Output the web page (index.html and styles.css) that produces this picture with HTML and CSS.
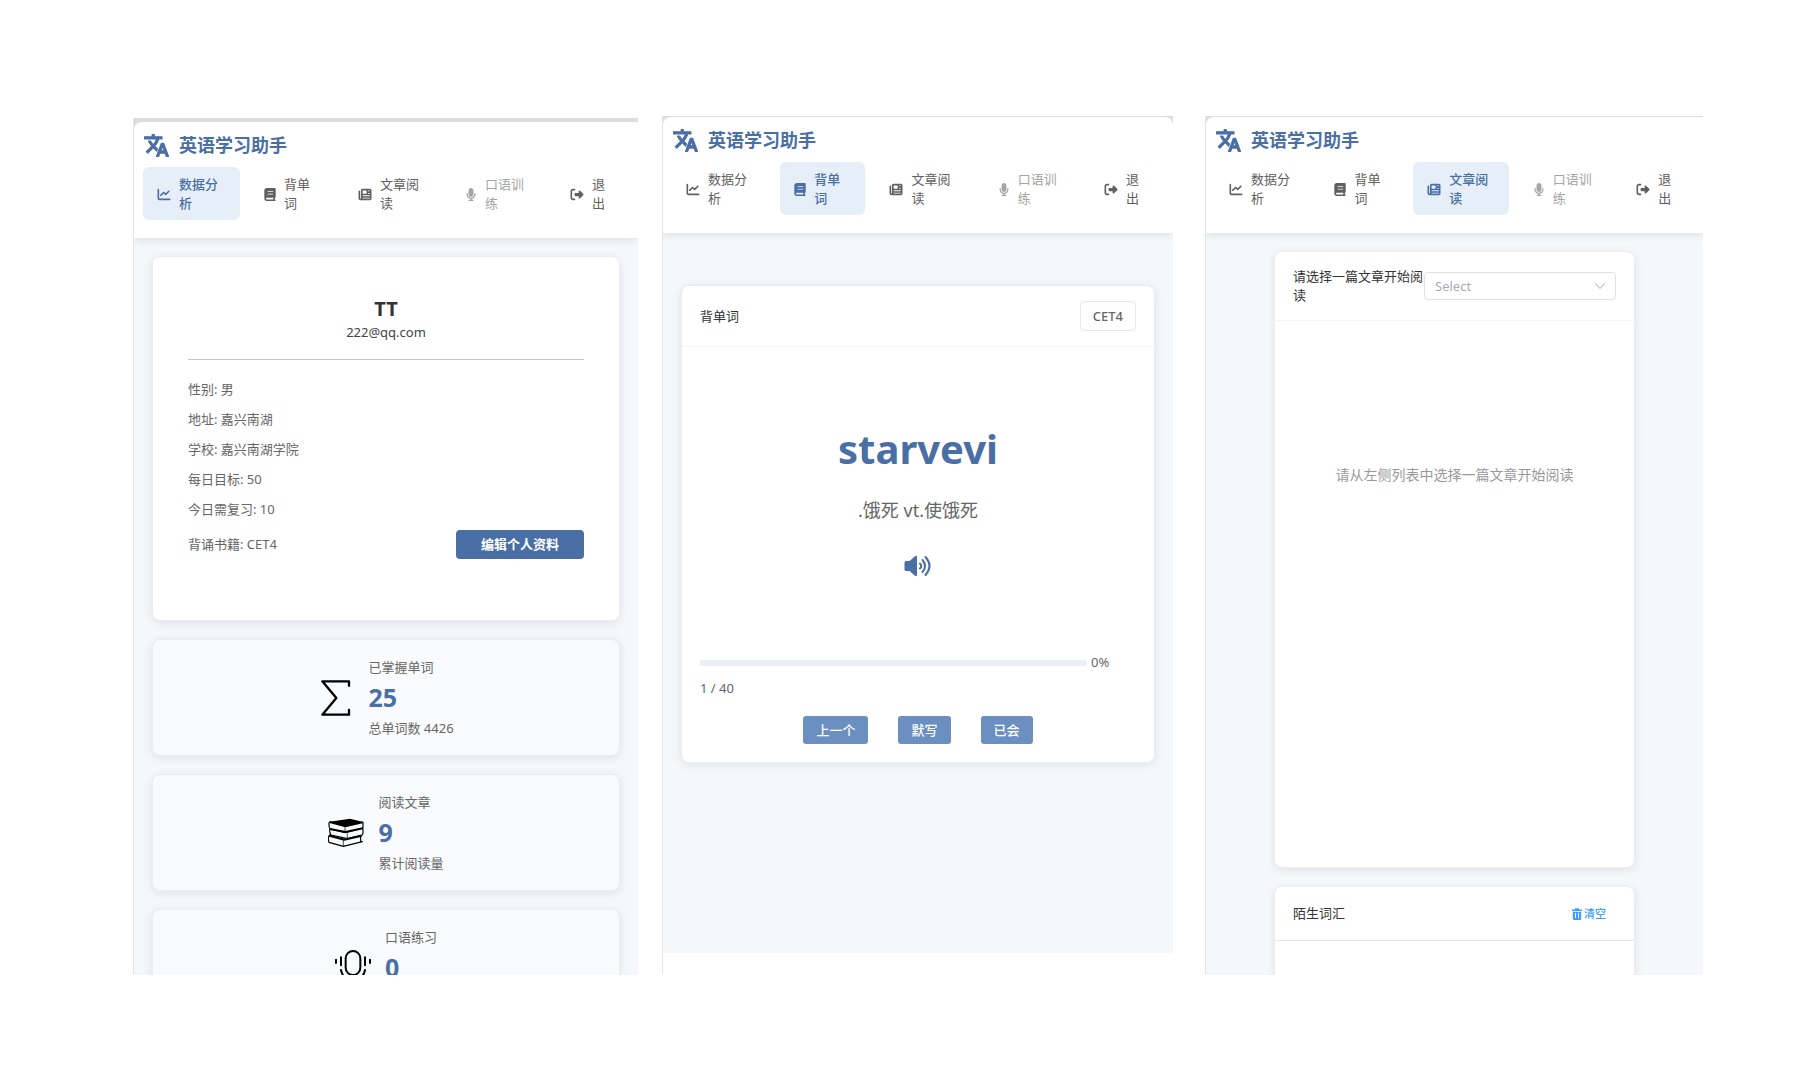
FILE: index.html
```html
<!DOCTYPE html>
<html lang="zh-CN">
<head>
<meta charset="utf-8">
<meta name="viewport" content="width=device-width, initial-scale=1">
<title>英语学习助手</title>
<link rel="stylesheet" href="styles.css">
</head>
<body>
<svg class="sprite" aria-hidden="true">
  <symbol id="i-translate" viewBox="0.500 1.500 23 21"><path stroke="currentColor" stroke-width="1.100" stroke-linejoin="round" d="M12.87 15.07l-2.54-2.51.03-.03c1.74-1.94 2.98-4.17 3.71-6.53H17V4h-7V2H8v2H1v1.99h11.17C11.5 7.92 10.44 9.75 9 11.35 8.07 10.32 7.3 9.19 6.69 8h-2c.73 1.63 1.73 3.17 2.98 4.56l-5.09 5.02L4 19l5-5 3.11 3.11.76-2.04zM18.5 10h-2L12 22h2l1.12-3h4.75L21 22h2l-4.5-12zm-2.62 7l1.62-4.33L19.12 17h-3.24z"/></symbol>
  <symbol id="i-chart" viewBox="0 0 512 512"><path d="M64 64c0-17.700-14.300-32-32-32S0 46.300 0 64V400c0 44.200 35.800 80 80 80H480c17.700 0 32-14.300 32-32s-14.300-32-32-32H80c-8.800 0-16-7.200-16-16V64zm406.600 86.600c12.500-12.500 12.500-32.800 0-45.300s-32.800-12.500-45.300 0L320 210.700l-57.400-57.400c-12.500-12.500-32.800-12.500-45.300 0l-112 112c-12.500 12.500-12.500 32.800 0 45.300s32.800 12.500 45.300 0L240 221.300l57.400 57.400c12.500 12.500 32.800 12.500 45.300 0l128-128z"/></symbol>
  <symbol id="i-book" viewBox="0 0 448 512"><path d="M96 0C43 0 0 43 0 96V416c0 53 43 96 96 96H384h32c17.700 0 32-14.300 32-32s-14.300-32-32-32V384c17.700 0 32-14.300 32-32V32c0-17.700-14.300-32-32-32H384 96zm0 384H352v64H96c-17.700 0-32-14.300-32-32s14.300-32 32-32zm32-240c0-8.800 7.200-16 16-16H336c8.800 0 16 7.200 16 16s-7.200 16-16 16H144c-8.800 0-16-7.200-16-16zm16 80H336c8.800 0 16 7.200 16 16s-7.200 16-16 16H144c-8.800 0-16-7.200-16-16s7.200-16 16-16z"/></symbol>
  <symbol id="i-news" viewBox="0 0 512 512"><path d="M96 96c0-35.300 28.700-64 64-64H448c35.300 0 64 28.700 64 64V416c0 35.300-28.700 64-64 64H80c-44.200 0-80-35.800-80-80V128c0-17.700 14.300-32 32-32s32 14.300 32 32V400c0 8.800 7.200 16 16 16s16-7.200 16-16V96zm64 24v80c0 13.300 10.700 24 24 24H296c13.300 0 24-10.700 24-24V120c0-13.300-10.700-24-24-24H184c-13.300 0-24 10.700-24 24zm208-8c0 8.800 7.200 16 16 16h48c8.800 0 16-7.200 16-16s-7.200-16-16-16H384c-8.800 0-16 7.200-16 16zm0 96c0 8.800 7.200 16 16 16h48c8.800 0 16-7.200 16-16s-7.200-16-16-16H384c-8.800 0-16 7.200-16 16zM160 304c0 8.800 7.200 16 16 16H432c8.800 0 16-7.200 16-16s-7.200-16-16-16H176c-8.800 0-16 7.200-16 16zm0 96c0 8.800 7.200 16 16 16H432c8.800 0 16-7.200 16-16s-7.200-16-16-16H176c-8.800 0-16 7.200-16 16z"/></symbol>
  <symbol id="i-mic" viewBox="0 0 384 512"><path d="M192 0C139 0 96 43 96 96V256c0 53 43 96 96 96s96-43 96-96V96c0-53-43-96-96-96zM64 216c0-13.300-10.700-24-24-24s-24 10.700-24 24v40c0 89.100 66.200 162.700 152 174.400V464H120c-13.300 0-24 10.700-24 24s10.700 24 24 24h72 72c13.300 0 24-10.700 24-24s-10.700-24-24-24H216V430.400c85.800-11.700 152-85.300 152-174.400V216c0-13.300-10.700-24-24-24s-24 10.700-24 24v40c0 70.700-57.300 128-128 128s-128-57.300-128-128V216z"/></symbol>
  <symbol id="i-exit" viewBox="0 0 512 512"><path d="M377.900 105.900L500.700 228.700c7.200 7.200 11.300 17.100 11.300 27.300s-4.100 20.100-11.300 27.300L377.900 406.100c-6.400 6.400-15 9.900-24 9.900c-18.700 0-33.900-15.200-33.900-33.900l0-62.100-128 0c-17.700 0-32-14.300-32-32l0-64c0-17.700 14.300-32 32-32l128 0 0-62.100c0-18.700 15.200-33.900 33.900-33.900c9 0 17.600 3.600 24 9.900zM160 96L96 96c-17.700 0-32 14.300-32 32l0 256c0 17.700 14.300 32 32 32l64 0c17.700 0 32 14.300 32 32s-14.300 32-32 32l-64 0c-53 0-96-43-96-96L0 128C0 75 43 32 96 32l64 0c17.700 0 32 14.300 32 32s-14.300 32-32 32z"/></symbol>
</svg>

<main class="board">
  <section class="screen screen-profile">
    <div class="frame">
      <header class="header">
        <div class="brand"><svg class="brand-icon"><use href="#i-translate"/></svg>英语学习助手</div>
        <nav class="nav">
          <a class="nav-item active" href="#data"><svg class="icon"><use href="#i-chart"/></svg><span>数据分析</span></a>
          <a class="nav-item" href="#words"><svg class="icon icon-slim"><use href="#i-book"/></svg><span>背单词</span></a>
          <a class="nav-item" href="#articles"><svg class="icon"><use href="#i-news"/></svg><span>文章阅读</span></a>
          <a class="nav-item disabled" href="#speaking"><svg class="icon icon-slim"><use href="#i-mic"/></svg><span>口语训练</span></a>
          <a class="nav-item nav-exit" href="#logout"><svg class="icon"><use href="#i-exit"/></svg><span>退出</span></a>
        </nav>
      </header>
    </div>
    <div class="content">
      <article class="card profile">
        <div class="profile-head">
          <h2 class="profile-name">TT</h2>
          <p class="profile-mail">222@qq.com</p>
        </div>
        <p class="profile-row">性别: 男</p>
        <p class="profile-row">地址: 嘉兴南湖</p>
        <p class="profile-row">学校: 嘉兴南湖学院</p>
        <p class="profile-row">每日目标: 50</p>
        <p class="profile-row">今日需复习: 10</p>
        <div class="profile-foot">
          <span>背诵书籍: CET4</span>
          <button class="btn-edit" type="button">编辑个人资料</button>
        </div>
      </article>
      <article class="card stat">
        <svg class="stat-icon" viewBox="570 180 108 108"><path fill="none" stroke="#000" stroke-width="7" stroke-linecap="round" stroke-linejoin="round" d="M663 197V184H583L625 234L583 284H663V270"/></svg>
        <div class="stat-text">
          <p class="stat-title">已掌握单词</p>
          <p class="stat-value">25</p>
          <p class="stat-note">总单词数 4426</p>
        </div>
      </article>
      <article class="card stat">
        <svg class="stat-icon" viewBox="596 585 108 108">
          <path d="M600 605L662 596L702 606L648 620Z"/>
          <path fill="none" stroke="#000" stroke-width="3.500" stroke-linejoin="round" stroke-linecap="round" d="M600 606Q597 617 602 627L648 638L701 624M701 607V622M601 629Q601 638 605 645L654 656L699 645Q703 636 700 626M601 645Q594 653 599 667L642 679L699 665M694 648V663"/>
          <path fill="none" stroke="#000" stroke-width="6" d="M602 627L648 636L701 625M600 647L645 659L697 647M601 606L648 619L700 607"/>
          <path fill="none" stroke="#000" stroke-width="2" d="M647 620V636M654 640V655M642 660V678"/>
        </svg>
        <div class="stat-text">
          <p class="stat-title">阅读文章</p>
          <p class="stat-value">9</p>
          <p class="stat-note">累计阅读量</p>
        </div>
      </article>
      <article class="card stat">
        <svg class="stat-icon" viewBox="616 990 108 108"><g fill="none" stroke="#000" stroke-width="6" stroke-linecap="round"><rect x="648" y="993" width="44" height="72" rx="22"/><path d="M619 1019v10M634 1012v24M706 1012v24M721 1019v10M634 1050Q640 1080 670 1080T706 1050M670 1080v13"/></g></svg>
        <div class="stat-text">
          <p class="stat-title">口语练习</p>
          <p class="stat-value">0</p>
        </div>
      </article>
    </div>
  </section>

  <section class="screen screen-words">
    <div class="frame">
      <header class="header">
        <div class="brand"><svg class="brand-icon"><use href="#i-translate"/></svg>英语学习助手</div>
        <nav class="nav">
          <a class="nav-item" href="#data"><svg class="icon"><use href="#i-chart"/></svg><span>数据分析</span></a>
          <a class="nav-item active" href="#words"><svg class="icon icon-slim"><use href="#i-book"/></svg><span>背单词</span></a>
          <a class="nav-item" href="#articles"><svg class="icon"><use href="#i-news"/></svg><span>文章阅读</span></a>
          <a class="nav-item disabled" href="#speaking"><svg class="icon icon-slim"><use href="#i-mic"/></svg><span>口语训练</span></a>
          <a class="nav-item nav-exit" href="#logout"><svg class="icon"><use href="#i-exit"/></svg><span>退出</span></a>
        </nav>
      </header>
    </div>
    <div class="content">
      <article class="card">
        <div class="card-head">
          <span>背单词</span>
          <button class="btn-book" type="button">CET4</button>
        </div>
        <div class="study">
          <h1 class="word">starvevi</h1>
          <p class="meaning">.饿死 vt.使饿死</p>
          <button class="btn-sound" type="button" aria-label="播放发音">
            <svg class="sound-icon" viewBox="0 0 28 22"><path d="M.500 7.500Q.500 6 2 6H5.500L11 1.300Q13 0 13 2.200V19.800Q13 22 11 20.700L5.500 16H2Q.500 16 .500 14.500Z"/><path fill="none" stroke="currentColor" stroke-width="2" stroke-linecap="round" d="M16 8.500Q18.500 11 16 13.500M18.500 5Q23.500 11 18.500 17M21.500 2Q29.500 11 21.500 20"/></svg>
          </button>
          <div class="progress">
            <div class="progress-track" role="progressbar" aria-valuemin="0" aria-valuemax="100" aria-valuenow="0"></div>
            <span class="progress-text">0%</span>
          </div>
          <p class="counter">1 / 40</p>
          <div class="actions">
            <button class="btn-action" type="button">上一个</button>
            <button class="btn-action" type="button">默写</button>
            <button class="btn-action" type="button">已会</button>
          </div>
        </div>
      </article>
    </div>
  </section>

  <section class="screen screen-reading">
    <div class="frame">
      <header class="header">
        <div class="brand"><svg class="brand-icon"><use href="#i-translate"/></svg>英语学习助手</div>
        <nav class="nav">
          <a class="nav-item" href="#data"><svg class="icon"><use href="#i-chart"/></svg><span>数据分析</span></a>
          <a class="nav-item" href="#words"><svg class="icon icon-slim"><use href="#i-book"/></svg><span>背单词</span></a>
          <a class="nav-item active" href="#articles"><svg class="icon"><use href="#i-news"/></svg><span>文章阅读</span></a>
          <a class="nav-item disabled" href="#speaking"><svg class="icon icon-slim"><use href="#i-mic"/></svg><span>口语训练</span></a>
          <a class="nav-item nav-exit" href="#logout"><svg class="icon"><use href="#i-exit"/></svg><span>退出</span></a>
        </nav>
      </header>
    </div>
    <div class="content">
      <article class="card reader">
        <div class="card-head">
          <label class="reader-label" for="article">请选择一篇文章开始阅读</label>
          <div class="select-wrap">
            <select class="select" id="article"><option>Select</option></select>
            <svg class="chevron" viewBox="0 0 12 12"><path fill="none" stroke="currentColor" d="M1.500 3.500L6 8.500L10.500 3.500"/></svg>
          </div>
        </div>
        <p class="empty">请从左侧列表中选择一篇文章开始阅读</p>
      </article>
      <article class="card vocab">
        <div class="card-head">
          <span>陌生词汇</span>
          <button class="btn-clear" type="button">
            <svg class="trash" viewBox="0 0 10 12"><path fill-rule="evenodd" d="M0 1.500H3V.300H7V1.500H10V3H0ZM.800 3.800H9.200V11Q9.200 12 8.200 12H1.800Q.800 12 .800 11ZM3 5V10H4V5ZM6 5V10H7V5Z"/></svg>清空
          </button>
        </div>
      </article>
    </div>
  </section>
</main>
</body>
</html>
```
FILE: styles.css
```css
* {
  box-sizing: border-box;
}

body {
  margin: 0;
  background: #fff;
  color: #666;
  font-family: "Noto Sans", "Noto Sans CJK SC", sans-serif;
  font-size: 13px;
  line-height: 19px;
}

h1, h2, p {
  margin: 0;
}

button, select {
  font: inherit;
  cursor: pointer;
}

svg {
  fill: currentColor;
  flex: none;
}

.sprite {
  display: none;
}

/* Three app screens side by side */
.board {
  display: grid;
  grid-template-columns: 505fr 511fr 506fr;
  grid-template-rows: minmax(0, 1fr);
  column-gap: 24px;
  height: 100vh;
  padding: 116px 99px 96px 133px;
}

.screen {
  display: flex;
  flex-direction: column;
  overflow: hidden;
  border-left: 1px solid #e4e5e9;
}

.screen-profile {
  margin-top: 2px;
}

.screen-reading {
  margin-left: 8px;
}

.frame {
  position: relative;
  z-index: 1;
  padding-top: 1px;
  background: #dcdde1;
  box-shadow: 0 2px 8px rgba(0, 0, 0, .1);
}

.screen-profile .frame {
  padding-top: 4px;
}

.header {
  height: 116px;
  padding: 9px;
  background: #fff;
  border-radius: 8px 0 0 0;
}

.screen-words .header {
  border-radius: 8px 8px 0 0;
}

.brand {
  display: flex;
  align-items: center;
  gap: 10px;
  height: 28px;
  margin-bottom: 8px;
  padding-left: 1px;
  color: #4a6fa5;
  font-size: 18px;
  font-weight: 600;
}

.brand-icon {
  width: 25px;
  height: 23px;
}

.nav {
  display: grid;
  grid-template-columns: 97fr 84fr 97fr 95fr 73fr;
  column-gap: 10px;
}

.nav-item {
  display: flex;
  align-items: center;
  gap: 8px;
  padding: 8px 14px 7px;
  border-radius: 6px;
  color: #606060;
  text-decoration: none;
}

.nav-exit {
  padding-right: 20px;
}

.nav-item.active {
  background: #e6eff7;
  color: #4a6fa5;
  font-weight: 500;
}

.nav-item.disabled {
  color: #a5a5a5;
}

.icon {
  width: 14px;
  height: 13px;
}

.icon-slim {
  width: 12px;
}

.content {
  display: flex;
  flex: 1;
  flex-direction: column;
  gap: 18px;
  min-height: 0;
  padding: 18px;
  background: #f5f7fb;
}

.card {
  flex: none;
  background: #fff;
  border: 1px solid #ebedf2;
  border-radius: 8px;
  box-shadow: 0 2px 10px rgba(0, 0, 0, .09);
}

.card-head {
  display: flex;
  align-items: center;
  justify-content: space-between;
  padding: 15px 18px;
  border-bottom: 1px solid #f5f5f7;
  color: #333;
}

/* Profile screen */
.profile {
  padding: 39px 35px 61px;
}

.profile-head {
  margin-bottom: 14px;
  padding-bottom: 17px;
  border-bottom: 1px solid #c4c4c4;
  text-align: center;
}

.profile-name {
  color: #333;
  font-size: 20px;
  line-height: 26px;
}

.profile-mail {
  color: #444;
  line-height: 20px;
}

.profile-row {
  line-height: 30px;
}

.profile-foot {
  display: flex;
  align-items: center;
  justify-content: space-between;
  margin-top: 6px;
}

.btn-edit {
  width: 128px;
  height: 29px;
  padding: 0;
  border: 0;
  border-radius: 4px;
  background: #4a6fa5;
  color: #fff;
  font-weight: 600;
}

.stat {
  display: flex;
  align-items: center;
  justify-content: center;
  gap: 14px;
  padding: 17px;
  background: #f9fafc;
}

.stat-icon {
  width: 36px;
  height: 36px;
  fill: #000;
}

.stat-text {
  min-height: 81px;
}

.stat-title,
.stat-note {
  line-height: 20px;
}

.stat-value {
  margin-bottom: 1px;
  color: #4a6fa5;
  font-size: 25px;
  font-weight: 700;
  line-height: 40px;
}

/* Vocabulary screen */
.screen-words .content {
  margin-bottom: 22px;
  padding-top: 52px;
}

.btn-book {
  height: 30px;
  padding: 0 12px;
  border: 1px solid #e6e7ea;
  border-radius: 4px;
  background: #fff;
  color: #666;
  font-weight: 500;
}

.study {
  padding: 74px 18px 18px;
}

.word {
  color: #4a6fa5;
  font-size: 40px;
  font-weight: 700;
  line-height: 56px;
  text-align: center;
}

.meaning {
  margin-top: 19px;
  font-size: 18px;
  line-height: 28px;
  text-align: center;
}

.btn-sound {
  display: flex;
  align-items: center;
  justify-content: center;
  height: 24px;
  margin: 30px auto 75px;
  padding: 0;
  border: 0;
  background: none;
  color: #4a6fa5;
}

.sound-icon {
  width: 28px;
  height: 22px;
}

.progress {
  display: flex;
  align-items: center;
  gap: 4px;
}

.progress-track {
  flex: 1;
  height: 6px;
  border-radius: 3px;
  background: #ebeef5;
}

.progress-text {
  width: 45px;
}

.counter {
  margin-top: 7px;
}

.actions {
  display: flex;
  justify-content: center;
  gap: 30px;
  margin-top: 18px;
}

.btn-action {
  height: 28px;
  padding: 0 13px;
  border: 0;
  border-radius: 3px;
  background: #6b8fc0;
  color: #fff;
  font-weight: 500;
}

/* Reading screen */
.screen-reading .content {
  padding-right: 68px;
  padding-left: 68px;
}

.reader {
  height: 617px;
}

.reader-label {
  flex: 1;
}

.select-wrap {
  position: relative;
  width: 192px;
}

.select {
  display: block;
  width: 100%;
  height: 28px;
  padding: 0 10px;
  appearance: none;
  border: 1px solid #dfe1e7;
  border-radius: 4px;
  background: #fff;
  color: #a8abb2;
}

.chevron {
  position: absolute;
  top: 8px;
  right: 10px;
  width: 12px;
  height: 12px;
  color: #a8abb2;
  pointer-events: none;
}

.empty {
  margin-top: 144px;
  color: #999;
  font-size: 14px;
  text-align: center;
}

.vocab {
  flex: 1 0 100px;
}

.vocab .card-head {
  padding: 17px 28px 17px 18px;
  border-color: #e4e7ef;
}

.btn-clear {
  display: flex;
  align-items: center;
  gap: 2px;
  padding: 0;
  border: 0;
  background: none;
  color: #409eff;
  font-size: 11px;
  font-weight: 500;
}

.trash {
  width: 10px;
  height: 12px;
}
```
